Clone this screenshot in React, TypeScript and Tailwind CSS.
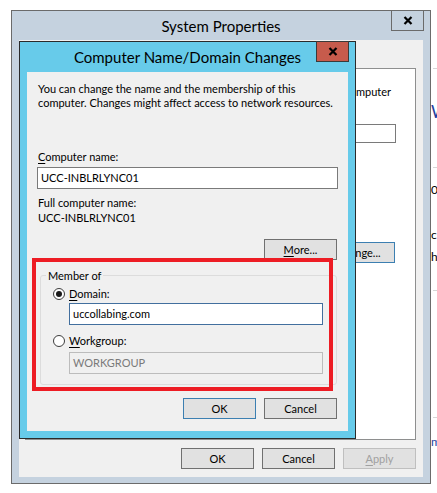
import type { ReactNode } from "react";

function Key({ children }: { children: ReactNode }) {
  return <span className="underline underline-offset-[2px]">{children}</span>;
}

function WinButton({
  children,
  tone = "normal",
}: {
  children: ReactNode;
  tone?: "normal" | "default" | "disabled";
}) {
  const border =
    tone === "default"
      ? "border-[#3c7fb1]"
      : tone === "disabled"
        ? "border-[#bfbfbf] text-[#a0a0a0]"
        : "border-[#707070]";
  return (
    <button
      type="button"
      className={`flex h-[21px] w-[73px] items-center justify-center border bg-[#e1e1e1] leading-[15px] ${border}`}
    >
      {children}
    </button>
  );
}

function Radio({ checked }: { checked: boolean }) {
  return (
    <span className="flex h-[12px] w-[12px] items-center justify-center rounded-full border border-[#3d3d3d] bg-white">
      {checked && <span className="h-[6px] w-[6px] rounded-full bg-[#1a1a1a]" />}
    </span>
  );
}

function CloseButton({ tone }: { tone: "plain" | "red" }) {
  const look =
    tone === "red"
      ? "bg-[#c75b4c] border-[#3a3a3a]"
      : "bg-[#c5d2df] border-[#6b6b6b]";
  return (
    <button
      type="button"
      className={`-mr-[1px] -mt-[1px] flex h-[21px] w-[33px] items-center justify-center self-start justify-self-end border ${look}`}
    >
      <svg width="10" height="9" viewBox="0 0 10 9">
        <path d="M1.5 1 L8.5 8 M8.5 1 L1.5 8" stroke="#000" strokeWidth="2.2" />
      </svg>
    </button>
  );
}

export default function App() {
  return (
    <div className="relative h-[493px] w-[437px] overflow-hidden bg-white font-['Lato',sans-serif] text-[11px] text-black">
      {/* window lying behind, only a strip of it shows */}
      <div className="absolute left-[431px] top-0 flex h-full w-[40px] flex-col">
        <div className="ml-[2px] mt-[68px] h-px bg-[#d6d6d6]" />
        <div className="mt-[33px] text-[17px] leading-[20px] text-[#1e3f9e]">W</div>
        <div className="ml-[2px] mt-[45px] h-px bg-[#d6d6d6]" />
        <div className="mt-[14px] text-[12px] leading-[15px]">0</div>
        <div className="mt-[30px] text-[12px] leading-[15px]">c</div>
        <div className="mt-[7px] text-[12px] leading-[15px]">h</div>
        <div className="ml-[2px] mt-[26px] h-px bg-[#d6d6d6]" />
        <div className="ml-[2px] mt-[126px] h-px bg-[#d6d6d6]" />
        <div className="mt-[16px] text-[12px] leading-[15px] text-[#1e3f9e]">m</div>
      </div>

      {/* System Properties */}
      <div className="absolute left-[11px] top-[10px] flex h-[474px] w-[420px] flex-col border border-[#6b6b6b] bg-[#c5d2df] px-[7px] pb-[6px]">
        <div className="grid h-[29px] grid-cols-[1fr_auto_1fr] items-center">
          <div />
          <div className="whitespace-nowrap text-[15px] leading-[20px]">System Properties</div>
          <CloseButton tone="plain" />
        </div>
        <div className="flex flex-1 flex-col bg-[#f0f0f0] pb-[8px] pl-[6px] pr-[7px] pt-[28px]">
          <div className="flex h-[372px] flex-col items-end overflow-hidden border border-[#8e8f8f] bg-white pr-[19px]">
            <div className="mr-[5px] mt-[15px] whitespace-nowrap leading-[15px]">
              Windows uses the following information to identify your computer
            </div>
            <div className="mt-[25px] h-[19px] w-[200px] border border-[#7a7a7a] bg-white" />
            <div className="mr-[1px] mt-[99px]">
              <WinButton tone="default">
                <Key>C</Key>hange...
              </WinButton>
            </div>
          </div>
          <div className="mt-[8px] flex justify-end gap-[8px]">
            <WinButton>OK</WinButton>
            <WinButton>Cancel</WinButton>
            <WinButton tone="disabled">
              <Key>A</Key>pply
            </WinButton>
          </div>
        </div>
      </div>

      {/* Computer Name/Domain Changes */}
      <div className="absolute left-[19px] top-[41px] flex h-[398px] w-[337px] flex-col border border-[#2b2b2b] bg-[#67cbea] px-[7px] pb-[7px]">
        <div className="grid h-[30px] grid-cols-[1fr_auto_1fr] items-center">
          <div />
          <div className="whitespace-nowrap text-[15px] leading-[20px]">Computer Name/Domain Changes</div>
          <CloseButton tone="red" />
        </div>
        <div className="relative flex flex-1 flex-col bg-[#f0f0f0] px-[10px]">
          <p className="mt-[10px] whitespace-nowrap pl-[1px] leading-[13.5px]">
            You can change the name and the membership of this
            <br />
            computer. Changes might affect access to network resources.
          </p>
          <div className="mt-[40px] pl-[1px] leading-[15px]">
            <Key>C</Key>omputer name:
          </div>
          <div className="mt-[3px] flex h-[22px] items-center border border-[#7a7a7a] bg-white pl-[3px]">
            UCC-INBLRLYNC01
          </div>
          <div className="mt-[6px] pl-[1px] leading-[15px]">Full computer name:</div>
          <div className="pl-[1px] leading-[15px]">UCC-INBLRLYNC01</div>
          <div className="mr-[1px] mt-[14px] self-end">
            <WinButton>
              <Key>M</Key>ore...
            </WinButton>
          </div>

          <fieldset className="ml-[3px] mr-[1px] mt-[8px] rounded-[3px] border border-[#dcdcdc] px-0 pb-[10px]">
            <legend className="ml-[5px] px-[2px] leading-[15px]">Member of</legend>
            <div className="flex flex-col pl-[12px] pr-[13px]">
              <div className="mt-[3px] flex h-[15px] items-center gap-[4px]">
                <Radio checked />
                <span className="leading-[15px]">
                  <Key>D</Key>omain:
                </span>
              </div>
              <div className="ml-[16px] mt-[2px] flex h-[22px] items-center border border-[#426f9e] bg-white pl-[3px]">
                uccollabing.com
              </div>
              <div className="mt-[8px] flex h-[15px] items-center gap-[4px]">
                <Radio checked={false} />
                <span className="leading-[15px]">
                  <Key>W</Key>orkgroup:
                </span>
              </div>
              <div className="ml-[16px] mt-[4px] flex h-[22px] items-center border border-[#bcbcbc] bg-[#f0f0f0] pl-[3px] text-[#7a7a7a]">
                WORKGROUP
              </div>
            </div>
          </fieldset>

          <div className="mr-[1px] mt-[13px] flex justify-end gap-[8px]">
            <WinButton tone="default">OK</WinButton>
            <WinButton>Cancel</WinButton>
          </div>

          {/* red highlight drawn over the group */}
          <div className="pointer-events-none absolute left-[5px] top-[186px] h-[133px] w-[301px] border-4 border-[#ed1c24]" />
        </div>
      </div>
    </div>
  );
}
